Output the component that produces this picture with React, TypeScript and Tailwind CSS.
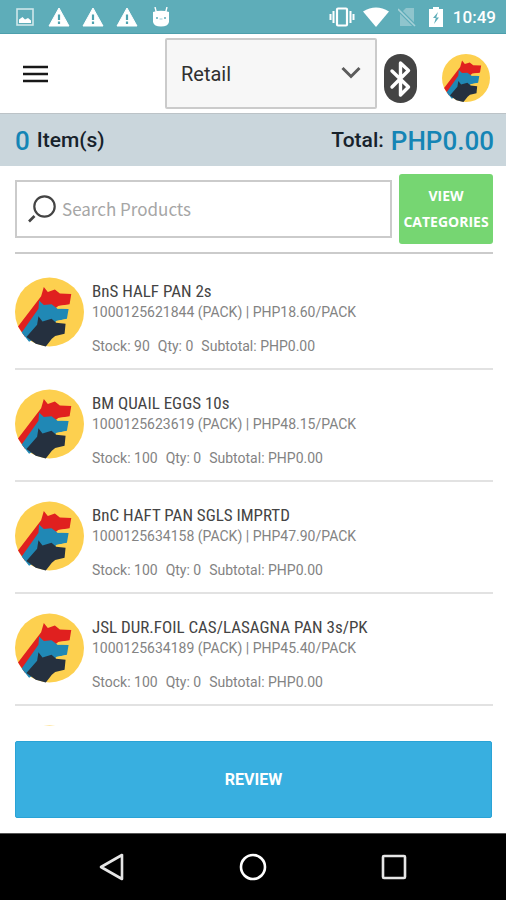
import { useState } from "react";

type Product = {
  name: string;
  code: string;
  price: string;
  stock: number;
};

const products: Product[] = [
  { name: "BnS HALF PAN 2s", code: "1000125621844", price: "PHP18.60", stock: 90 },
  { name: "BM QUAIL EGGS 10s", code: "1000125623619", price: "PHP48.15", stock: 100 },
  { name: "BnC HAFT PAN SGLS IMPRTD", code: "1000125634158", price: "PHP47.90", stock: 100 },
  { name: "JSL DUR.FOIL CAS/LASAGNA PAN 3s/PK", code: "1000125634189", price: "PHP45.40", stock: 100 },
];

function DogsLogo({ className }: { className: string }) {
  return (
    <svg viewBox="16 22 206 206" className={className} aria-hidden="true">
      <circle cx="119" cy="125" r="103" fill="#fdd04f" />
      <path d="M25 168 L94 78 L102 50 L114 65 L135 58 L150 70 L184 71 L179 102 L146 107 L120 125 L46 200 Z" fill="#e0201f" />
      <path d="M36 186 L86 115 L88 91 L102 104 L125 102 L143 115 L176 116 L171 145 L140 152 L100 190 L58 214 Z" fill="#2088b5" />
      <path d="M144 107 L181 103 L178 109 L143 115 Z M138 152 L172 146 L169 154 L139 158 Z" fill="#fdd04f" />
      <path d="M50 200 L82 163 L86 138 L98 153 L125 145 L139 157 L167 160 L164 190 L136 197 L126 205 L108 228 L78 220 Z" fill="#25303f" />
    </svg>
  );
}

function WarningIcon() {
  return (
    <svg viewBox="0 0 22 20" className="h-5 w-[22px]" aria-hidden="true">
      <path d="M11 1 L21 19 H1 Z" fill="#fff" stroke="#fff" strokeLinejoin="round" />
      <path d="M11 7.5 V13 M11 14.5 V17" stroke="#4fa3b0" strokeWidth="2.2" />
    </svg>
  );
}

function StatusBar() {
  return (
    <div className="flex h-[34px] shrink-0 items-center justify-between border-b border-[#4d9fac] bg-[#5eadb9] pr-[10px] pl-4 text-white">
      <div className="flex items-center gap-3">
        <svg viewBox="0 0 18 18" className="mr-[2px] h-[18px] w-[18px]" aria-hidden="true">
          <rect x="1" y="1" width="16" height="16" fill="none" stroke="#cfe6ea" strokeWidth="1.6" />
          <path d="M3 15 V11.5 L6.5 9 L9 11.5 L12 10 L15 12.5 V15 Z" fill="#fff" />
        </svg>
        <WarningIcon />
        <WarningIcon />
        <WarningIcon />
        <svg viewBox="0 0 18 20" className="ml-[2px] h-5 w-[18px]" aria-hidden="true">
          <path d="M3 0 L4.5 6 M15 0 L13.5 6" stroke="#fff" strokeWidth="1.4" />
          <path d="M1 5 Q9 2.5 17 5 V15 Q16 19.5 9 19.5 Q2 19.5 1 15 Z" fill="#fff" />
          <circle cx="5" cy="11" r="1" fill="#5eadb9" />
          <circle cx="13" cy="11" r="1" fill="#5eadb9" />
          <path d="M7.5 12 H10.5" stroke="#9ccdd5" />
        </svg>
      </div>
      <div className="flex items-center">
        <svg viewBox="0 0 26 20" className="h-5 w-[26px]" aria-hidden="true">
          <rect x="8" y="1.5" width="10" height="17" rx="1" fill="none" stroke="#fff" strokeWidth="2.2" />
          <path d="M4.5 4 V16 M21.5 4 V16 M1.5 7 V13 M24.5 7 V13" stroke="#fff" strokeWidth="2" />
        </svg>
        <svg viewBox="0 0 26 20" className="ml-2 h-5 w-[26px]" aria-hidden="true">
          <path d="M0 4.5 Q13 -3.5 26 4.5 L13 20 Z" fill="#fff" />
        </svg>
        <svg viewBox="0 0 18 20" className="ml-[9px] h-5 w-[18px]" aria-hidden="true">
          <path d="M2 7 L8 1 H16 V19 H2 Z" fill="#8fc5cd" />
          <path d="M0 2 L17 19" stroke="#5eadb9" strokeWidth="4" />
          <path d="M0 2 L17 19" stroke="#a6d1d8" strokeWidth="1.6" />
        </svg>
        <svg viewBox="0 0 16 22" className="ml-3 h-[22px] w-4" aria-hidden="true">
          <path d="M1 3 H5 V1 H11 V3 H15 V21 H1 Z" fill="#fff" />
          <path d="M10 6 L5 12 H7.8 L6 18 L11 11.5 H8.2 Z" fill="#5eadb9" />
        </svg>
        <span className="ml-[9px] text-[17px] leading-5 font-medium">10:49</span>
      </div>
    </div>
  );
}

function Header() {
  return (
    <header className="flex h-[79px] shrink-0 items-center bg-white pr-4">
      <button type="button" aria-label="Open menu" className="ml-[23px] flex h-10 w-[25px] items-center">
        <svg viewBox="0 0 25 18" className="h-[18px] w-[25px]" aria-hidden="true">
          <path d="M0 2 H25 M0 9 H25 M0 16 H25" stroke="#181818" strokeWidth="2.4" />
        </svg>
      </button>
      <div className="relative ml-auto w-[212px]">
        <select
          aria-label="Price type"
          className="h-[71px] w-full appearance-none rounded-[2px] border-2 border-[#cbcbcb] bg-[#f7f7f7] px-[14px] text-xl text-[#303030]"
        >
          <option>Retail</option>
        </select>
        <svg viewBox="0 0 20 14" className="pointer-events-none absolute top-7 right-4 h-[14px] w-5" aria-hidden="true">
          <path d="M1.5 2 L10 10.5 L18.5 2" fill="none" stroke="#5c5c5c" strokeWidth="3" />
        </svg>
      </div>
      <button type="button" aria-label="Bluetooth" className="mt-[10px] ml-[7px]">
        <svg viewBox="0 0 33 50" className="h-[50px] w-[33px]" aria-hidden="true">
          <rect width="33" height="49" rx="16.5" fill="#444" />
          <path d="M8 17 L24.5 33 L16.5 41 V9 L24.5 16.5 L8 33" fill="none" stroke="#fff" strokeWidth="3.4" strokeLinejoin="round" strokeLinecap="round" />
        </svg>
      </button>
      <button type="button" aria-label="Account" className="mt-2 ml-[25px]">
        <DogsLogo className="h-12 w-12" />
      </button>
    </header>
  );
}

function ProductRow({ product }: { product: Product }) {
  return (
    <li className="flex h-28 items-start gap-2 border-b-2 border-[#e2e2e2] pt-[19px]">
      <DogsLogo className="h-[70px] w-[69px] shrink-0" />
      <div className="min-w-0 pt-px">
        <h2 className="font-['Roboto_Condensed','Roboto',sans-serif] text-[17px] leading-[26px] text-[#444]">
          {product.name}
        </h2>
        <p className="text-sm leading-4 text-[#838383]">
          {product.code} (PACK) | {product.price}/PACK
        </p>
        <p className="mt-[18px] flex gap-2 text-sm leading-4 text-[#838383]">
          <span>Stock: {product.stock}</span>
          <span>Qty: 0</span>
          <span>Subtotal: PHP0.00</span>
        </p>
      </div>
    </li>
  );
}

export default function App() {
  const [query, setQuery] = useState("");

  return (
    <div className="flex h-screen flex-col bg-white font-['Roboto',sans-serif]">
      <StatusBar />
      <Header />

      <section className="flex h-[53px] shrink-0 items-center justify-between border-t border-[#bcc3c7] bg-[#cad6dc] pt-[2px] pr-3 pl-[15px] font-medium text-[#17222b]">
        <p className="flex items-center gap-[7px] text-[21px]">
          <span className="text-[26px] text-[#1585b5]">0</span>
          Item(s)
        </p>
        <p className="flex items-center gap-[7px] text-[21px]">
          Total:
          <span className="text-[26px] text-[#1585b5]">PHP0.00</span>
        </p>
      </section>

      <main className="flex min-h-0 flex-1 flex-col pr-[13px] pl-[15px]">
        <div className="flex shrink-0 items-center gap-[7px] border-b-2 border-[#cbcbcb] pt-2 pb-2">
          <label className="flex h-[58px] min-w-0 flex-1 items-center gap-[6px] border-2 border-[#cbcbcb] pl-[11px]">
            <svg viewBox="0 0 28 28" className="h-7 w-7 shrink-0" aria-hidden="true">
              <circle cx="16.5" cy="11.5" r="10.2" fill="none" stroke="#444" strokeWidth="2.2" />
              <path d="M6.5 21 L1 26.5" stroke="#444" strokeWidth="2.6" />
            </svg>
            <input
              type="text"
              aria-label="Search Products"
              placeholder="Search Products"
              value={query}
              onChange={(event) => setQuery(event.target.value)}
              className="min-w-0 flex-1 bg-transparent font-['Noto_Sans_CJK_SC',sans-serif] text-[17px] text-[#333] outline-none placeholder:text-[#a6a6a6]"
            />
          </label>
          <button
            type="button"
            className="h-[70px] w-[94px] shrink-0 rounded-[3px] bg-[#76d672] font-['Open_Sans',sans-serif] text-sm leading-[26px] font-bold text-white"
          >
            VIEW CATEGORIES
          </button>
        </div>

        <ul className="mt-1 min-h-0 flex-1 overflow-hidden">
          {products.map((product) => (
            <ProductRow key={product.code} product={product} />
          ))}
          <li className="pt-[19px]">
            <DogsLogo className="h-[70px] w-[69px]" />
          </li>
        </ul>
      </main>

      <footer className="shrink-0 pt-[15px] pr-[14px] pb-[15px] pl-[15px]">
        <button
          type="button"
          className="h-[77px] w-full rounded-[2px] border border-[#2aa3d6] bg-[#38afe0] text-base font-bold text-white"
        >
          REVIEW
        </button>
      </footer>

      <nav className="flex h-[67px] shrink-0 items-center justify-center gap-[113px] border-t border-[#555] bg-black">
        <button type="button" aria-label="Back">
          <svg viewBox="0 0 28 28" className="h-7 w-7" aria-hidden="true">
            <path d="M24 2 V26 L3 14 Z" fill="none" stroke="#e6e6e6" strokeWidth="2.6" strokeLinejoin="round" />
          </svg>
        </button>
        <button type="button" aria-label="Home">
          <svg viewBox="0 0 28 28" className="h-7 w-7" aria-hidden="true">
            <circle cx="14" cy="14" r="12" fill="none" stroke="#fff" strokeWidth="2.6" />
          </svg>
        </button>
        <button type="button" aria-label="Recent apps">
          <svg viewBox="0 0 28 28" className="h-7 w-7" aria-hidden="true">
            <rect x="3" y="3" width="22" height="22" rx="1" fill="none" stroke="#e6e6e6" strokeWidth="2.6" />
          </svg>
        </button>
      </nav>
    </div>
  );
}
